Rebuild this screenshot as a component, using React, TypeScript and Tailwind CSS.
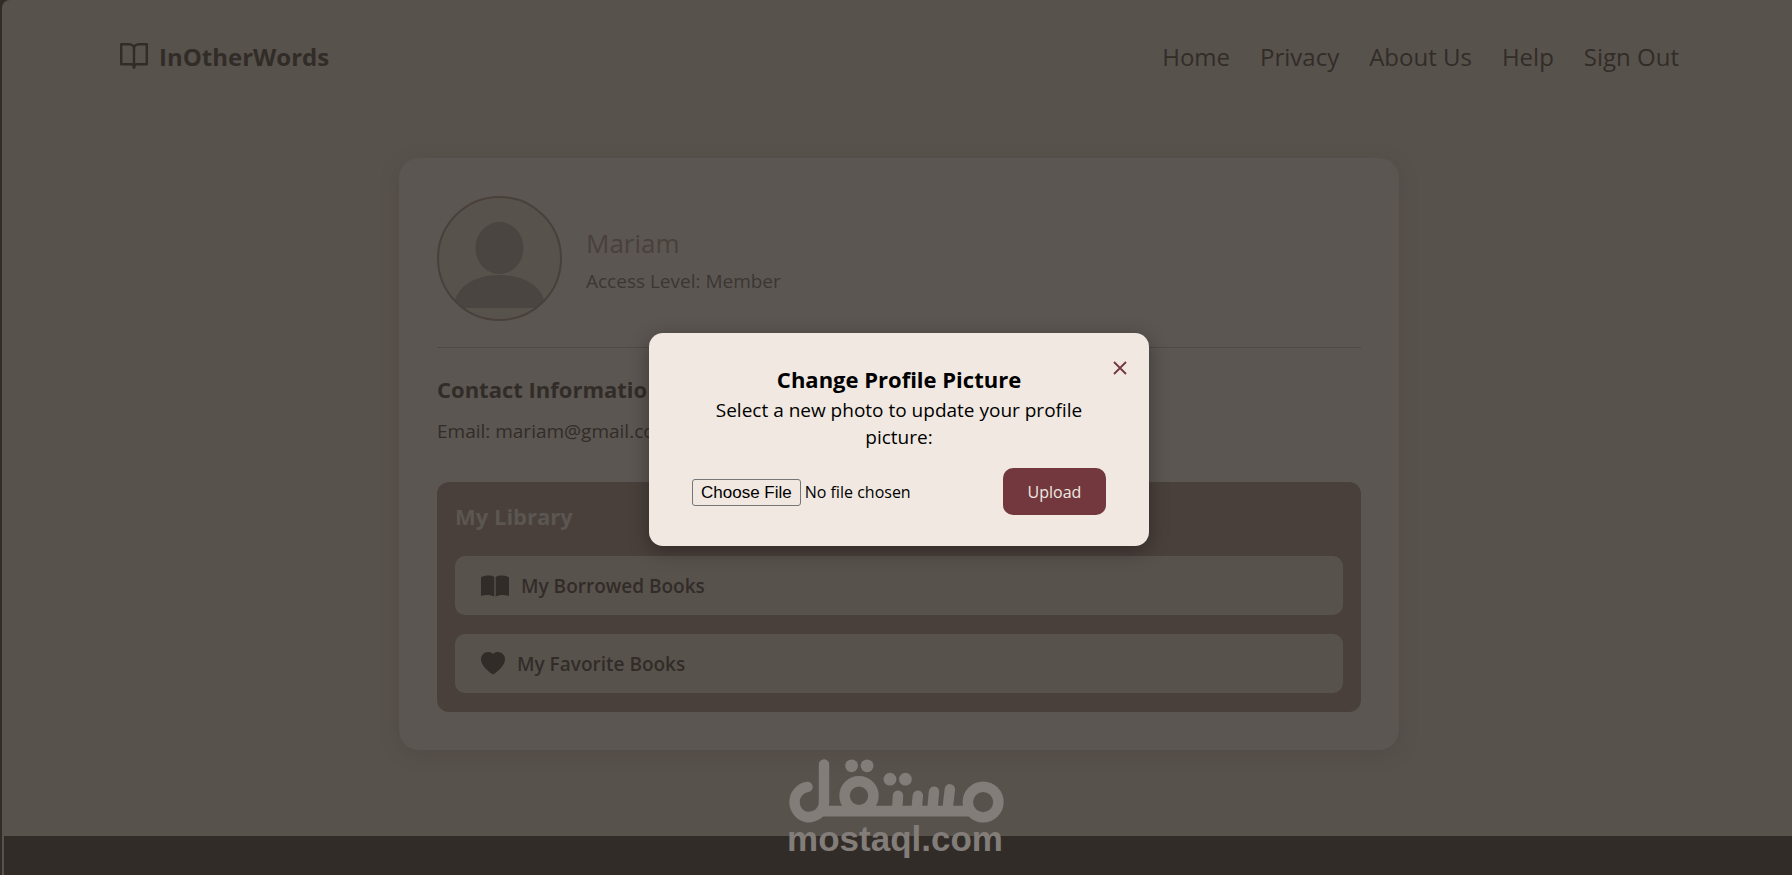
import React from "react";
import { BsHeartFill } from "react-icons/bs";

const links = ["Home", "Privacy", "About Us", "Help", "Sign Out"];

function BookLogo() {
  return (
    <svg viewBox="0 0 28 26" className="mb-0.5 h-[26px] w-7" fill="none" stroke="currentColor" strokeWidth="2.4" strokeLinejoin="round" aria-hidden="true">
      <path d="M1.2 1.2H9C12 1.2 14 3 14 5.5C14 3 16 1.2 19 1.2H26.8V21.2H17C15.2 21.2 14 22.4 14 24.5C14 22.4 12.8 21.2 11 21.2H1.2Z" />
      <path d="M14 5V25.5" />
    </svg>
  );
}

function OpenBook() {
  return (
    <svg viewBox="0 0 28 22" className="h-[22px] w-7" fill="currentColor" aria-hidden="true">
      <path d="M0 2.2C3.5 .4 9.5 -.4 13.3 2V21.6C10 19.6 4 19.6 0 21Z" />
      <path d="M28 2.2C24.5 .4 18.5 -.4 14.7 2V21.6C18 19.6 24 19.6 28 21Z" />
    </svg>
  );
}

function Avatar() {
  return (
    <svg viewBox="0 0 125 125" className="h-[125px] w-[125px] shrink-0" role="img" aria-label="Profile picture">
      <defs>
        <clipPath id="avatar-clip">
          <circle cx="62.5" cy="62.5" r="61.5" />
        </clipPath>
      </defs>
      <circle cx="62.5" cy="62.5" r="61.5" fill="#58524d" />
      <g clipPath="url(#avatar-clip)" fill="#4a4541">
        <ellipse cx="62.5" cy="52" rx="24" ry="26" />
        <path d="M17 112C17 92 36 79 62.5 79S108 92 108 112Z" />
      </g>
      <circle cx="62.5" cy="62.5" r="61.5" fill="none" stroke="#49403b" strokeWidth="2" />
    </svg>
  );
}

function Watermark() {
  return (
    <div className="pointer-events-none absolute inset-x-0 bottom-4 flex flex-col items-center pr-0.5 text-[#827d79]">
      <svg viewBox="84 54 645 190" className="-mb-1 h-16 w-[217px]" fill="none" stroke="currentColor" strokeWidth="31" strokeLinecap="round" aria-hidden="true">
        <circle cx="667" cy="182" r="45.5" />
        <path d="M185 209H640" strokeLinecap="butt" strokeWidth="32" />
        <path d="M568 144L561 205M521 151L516 205M473 163L469 205M414 163L411 205" />
        <circle cx="298" cy="163" r="43" />
        <path d="M194 70V182C194 209 172 227 145 227A45.5 45.5 0 0 1 145 137" />
        <g fill="currentColor" stroke="none">
          <circle cx="276" cy="74" r="19" />
          <circle cx="322" cy="74" r="19" />
          <circle cx="390" cy="114" r="19" />
          <circle cx="436" cy="114" r="19" />
        </g>
      </svg>
      <span className="font-['Liberation_Sans',sans-serif] text-[35px] font-bold leading-10">mostaql.com</span>
    </div>
  );
}

export default function App() {
  return (
    <div className="relative min-h-screen bg-[#322c28] pl-0.5 font-['Open_Sans','Noto_Sans',sans-serif] text-[#322c28]">
      <div className="flex min-h-screen flex-col rounded-tl-lg bg-[#58524d] pl-0.5">
        <header className="flex items-center justify-between pb-[39px] pl-[116px] pr-[113px] pt-[37px]">
          <a href="#" className="flex items-center gap-[11px] text-2xl font-bold leading-10">
            <BookLogo />
            InOtherWords
          </a>
          <nav className="flex gap-[30px] text-2xl leading-10">
            {links.map((l) => (
              <a key={l} href="#">{l}</a>
            ))}
          </nav>
        </header>

        <main className="flex flex-1 flex-col pl-0.5">
          <section className="mx-auto mt-[42px] w-full max-w-[1000px] rounded-[20px] bg-[#5b5652] p-[38px] shadow-[0_4px_20px_rgba(50,44,40,0.18)]">
            <div className="flex items-center gap-6 border-b border-[#4f4843] pb-[26px]">
              <Avatar />
              <div>
                <h1 className="pt-0.5 text-[26px] leading-9 text-[#49403b]">Mariam</h1>
                <p className="mt-1.5 text-[19px] leading-7 text-[#3c3632]">Access Level: Member</p>
              </div>
            </div>
            <h2 className="mt-[25px] text-[22px] font-bold leading-8">Contact Information</h2>
            <p className="mt-3 text-[19px] leading-7">Email: mariam@gmail.com</p>

            <div className="mt-[37px] rounded-xl bg-[#49403b] px-[18px] pb-[19px] pt-[18px]">
              <h2 className="text-[22px] font-bold leading-8 text-[#5b5652]">My Library</h2>
              <ul className="mt-6 flex flex-col gap-[19px]">
                <li>
                  <a href="#" className="flex h-[59px] items-center gap-3 rounded-[10px] bg-[#58524d] px-[26px] text-[19px] font-semibold">
                    <OpenBook />
                    <span className="pt-0.5">My Borrowed Books</span>
                  </a>
                </li>
                <li>
                  <a href="#" className="flex h-[59px] items-center gap-3 rounded-[10px] bg-[#58524d] px-[26px] text-[19px] font-semibold">
                    <BsHeartFill className="h-6 w-6" />
                    <span className="pt-0.5">My Favorite Books</span>
                  </a>
                </li>
              </ul>
            </div>
          </section>
        </main>
        <footer className="h-[39px] bg-[#322c28]" />
      </div>

      <Watermark />

      <div className="absolute inset-0 flex items-center justify-center pl-1.5 pt-1">
        <div role="dialog" aria-labelledby="dialog-title" className="relative w-[500px] rounded-[14px] bg-[#f0e8e1] px-[43px] pb-[31px] pt-[30px] text-center text-black shadow-[0_5px_19px_rgba(0,0,0,0.35)]">
          <button type="button" aria-label="Close" className="absolute right-[22px] top-7 text-[#72383d]">
            <svg viewBox="0 0 14 14" className="h-3.5 w-3.5" fill="none" stroke="currentColor" strokeWidth="1.8" aria-hidden="true">
              <path d="M1 1L13 13M13 1L1 13" />
            </svg>
          </button>
          <h2 id="dialog-title" className="text-[22px] font-bold leading-8">Change Profile Picture</h2>
          <label htmlFor="photo" className="mt-0.5 block text-[19px] leading-[27px]">
            Select a new photo to update your profile picture:
          </label>
          <form className="mt-[17px] flex items-center justify-between" onSubmit={(e) => e.preventDefault()}>
            <input
              id="photo"
              type="file"
              className="mt-0.5 w-64 text-base file:mr-1 file:h-[27px] file:rounded-[3px] file:border file:border-solid file:border-[#767676] file:px-2 file:font-['Liberation_Sans',sans-serif] file:text-[17px] file:leading-6"
            />
            <button type="submit" className="h-[47px] w-[103px] rounded-[10px] bg-[#72383d] text-base font-medium text-[#f0e8e1]">
              Upload
            </button>
          </form>
        </div>
      </div>
    </div>
  );
}
